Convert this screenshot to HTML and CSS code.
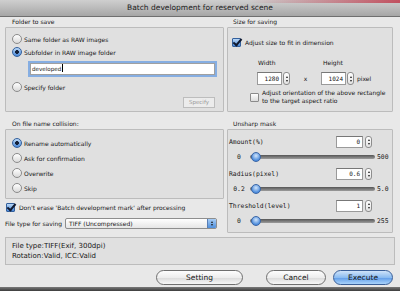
FILE: index.html
```html
<!DOCTYPE html>
<html lang="en">
<head>
  <meta charset="UTF-8">
  <title>Batch development for reserved scene</title>
  <link rel="stylesheet" href="styles.css">
</head>
<body>
  <div class="window">
    <div class="titlebar">Batch development for reserved scene</div>

    <div class="content">
      <div class="grid">
        <!-- Folder to save -->
        <section class="group">
          <div class="group-label">Folder to save</div>
          <div class="group-box folder-box">
            <div class="radio-row"><span class="radio"></span>Same folder as RAW images</div>
            <div class="radio-row row-tight"><span class="radio on"></span>Subfolder in RAW image folder</div>
            <div class="text-input">developed<span class="caret"></span></div>
            <div class="radio-row row-specify"><span class="radio"></span>Specify folder</div>
            <div class="small-btn">Specify</div>
          </div>
        </section>

        <!-- Size for saving -->
        <section class="group">
          <div class="group-label">Size for saving</div>
          <div class="group-box size-box">
            <div class="check-row"><span class="checkbox on"></span>Adjust size to fit in dimension</div>
            <div class="dim-grid">
              <span class="dim-label">Width</span>
              <span></span>
              <span class="dim-label dim-label-h">Height</span>
              <span></span>
              <div class="num-field"><span class="num-input">1280</span><span class="stepper"><i class="up"></i><i class="down"></i></span></div>
              <span class="times">x</span>
              <div class="num-field"><span class="num-input">1024</span><span class="stepper"><i class="up"></i><i class="down"></i></span></div>
              <span class="unit">pixel</span>
            </div>
            <div class="check-row orient-row">
              <span class="checkbox"></span>
              <span class="two-lines">Adjust orientation of the above rectangle<br>to the target aspect ratio</span>
            </div>
          </div>
        </section>

        <!-- Left column: collision + options -->
        <div class="left-col">
          <section class="group">
            <div class="group-label">On file name collision:</div>
            <div class="group-box collision-box">
              <div class="radio-row"><span class="radio on"></span>Rename automatically</div>
              <div class="radio-row"><span class="radio"></span>Ask for confirmation</div>
              <div class="radio-row"><span class="radio"></span>Overwrite</div>
              <div class="radio-row"><span class="radio"></span>Skip</div>
            </div>
          </section>
          <div class="check-row erase-row"><span class="checkbox on"></span>Don't erase 'Batch development mark' after processing</div>
          <div class="filetype-row">
            <span>File type for saving</span>
            <div class="select">
              <span class="select-text">TIFF (Uncompressed)</span>
              <span class="select-arrow"><i class="up"></i><i class="down"></i></span>
            </div>
          </div>
        </div>

        <!-- Unsharp mask -->
        <section class="group">
          <div class="group-label">Unsharp mask</div>
          <div class="group-box unsharp-box">
            <div class="param">
              <div class="param-row">
                <span class="param-name">Amount(%)</span>
                <div class="num-field"><span class="num-input">0</span><span class="stepper"><i class="up"></i><i class="down"></i></span></div>
              </div>
              <div class="slider-row">
                <span class="slider-min">0</span>
                <span class="track"><span class="thumb"></span></span>
                <span class="slider-max">500</span>
              </div>
            </div>
            <div class="param">
              <div class="param-row">
                <span class="param-name">Radius(pixel)</span>
                <div class="num-field"><span class="num-input">0.6</span><span class="stepper"><i class="up"></i><i class="down"></i></span></div>
              </div>
              <div class="slider-row">
                <span class="slider-min">0.2</span>
                <span class="track"><span class="thumb"></span></span>
                <span class="slider-max">5.0</span>
              </div>
            </div>
            <div class="param">
              <div class="param-row">
                <span class="param-name">Threshold(level)</span>
                <div class="num-field"><span class="num-input">1</span><span class="stepper"><i class="up"></i><i class="down"></i></span></div>
              </div>
              <div class="slider-row">
                <span class="slider-min">0</span>
                <span class="track"><span class="thumb"></span></span>
                <span class="slider-max">255</span>
              </div>
            </div>
          </div>
        </section>
      </div>

      <div class="info">
        <div>File type:TIFF(Exif, 300dpi)</div>
        <div>Rotation:Valid, ICC:Valid</div>
      </div>

      <div class="buttons">
        <div class="btn btn-setting">Setting</div>
        <div class="btn btn-cancel">Cancel</div>
        <div class="btn btn-execute">Execute</div>
      </div>
    </div>

    <div class="bottom-edge"></div>
  </div>
</body>
</html>
```

FILE: styles.css
```css
* {
  margin: 0;
  padding: 0;
  box-sizing: border-box;
}

body {
  width: 400px;
  height: 291px;
  overflow: hidden;
  background-color: #e8e8e8;
  font-family: 'DejaVu Sans', sans-serif;
  font-size: 6px;
  color: #161616;
}

.window {
  height: 291px;
  display: flex;
  flex-direction: column;
}

.titlebar {
  height: 17px;
  line-height: 16px;
  text-align: center;
  font-size: 7.5px;
  color: #1c1c1c;
  background:
    linear-gradient(to right, rgba(190, 40, 60, 0) 62%, rgba(190, 40, 60, 0.75)) top / 100% 3px no-repeat,
    linear-gradient(#cfcfcf, #a6a6a6);
  border-bottom: 1px solid #6f6f6f;
}

.content {
  flex: 1;
  padding: 0 5px;
}

.grid {
  display: grid;
  grid-template-columns: 219px 166px;
  column-gap: 3px;
}

.group-label {
  height: 10px;
  line-height: 10px;
  padding-left: 7px;
}

.grid > :nth-child(3),
.grid > :nth-child(4) {
  margin-top: 7px;
}

.grid > :nth-child(2) .group-label,
.grid > :nth-child(4) .group-label {
  padding-left: 6px;
}

.group-box {
  border: 1px solid #bcbcbc;
  background-color: #e0e0e0;
  border-radius: 1px;
}

/* radios and checkboxes */
.radio-row,
.check-row {
  display: flex;
  align-items: center;
  gap: 2px;
  height: 12px;
}

.radio {
  width: 10px;
  height: 10px;
  border-radius: 50%;
  border: 1px solid #8b8b8b;
  background: linear-gradient(#ffffff, #d9d9d9);
  flex-shrink: 0;
}

.radio.on {
  border-color: #34609c;
  background:
    radial-gradient(circle, #13203a 0 1.6px, transparent 2.2px),
    linear-gradient(#b9d8f8, #4a88d8);
}

.checkbox {
  width: 9px;
  height: 9px;
  border: 1px solid #8b8b8b;
  border-radius: 1px;
  background: linear-gradient(#ffffff, #dcdcdc);
  flex-shrink: 0;
  position: relative;
}

.checkbox.on {
  border-color: #34609c;
  background: linear-gradient(#b9d8f8, #4a88d8);
}

.checkbox.on::after {
  content: '';
  position: absolute;
  left: 2px;
  top: -2px;
  width: 3px;
  height: 7px;
  border-right: 2px solid #101a30;
  border-bottom: 2px solid #101a30;
  transform: rotate(40deg);
}

/* folder to save */
.folder-box {
  height: 85px;
  padding: 5px 6px 0 6px;
  display: flex;
  flex-direction: column;
}

.row-tight {
  margin-top: 1px;
}

.text-input {
  margin: 3px 0 0 16px;
  width: 189px;
  height: 16px;
  line-height: 12px;
  padding-left: 2px;
  font-size: 5.6px;
  background-color: #ffffff;
  border: 2px solid #86aee2;
  box-shadow: inset 0 0 0 1px #a0a0a0;
}

.caret {
  display: inline-block;
  width: 1px;
  height: 8px;
  margin-left: 1px;
  vertical-align: -1px;
  background-color: #000;
}

.row-specify {
  margin-top: 4px;
}

.small-btn {
  align-self: flex-end;
  margin: 4px 2px 0 0;
  width: 32px;
  height: 11px;
  line-height: 9px;
  text-align: center;
  font-size: 5.5px;
  color: #9a9a9a;
  background-color: #ececec;
  border: 1px solid #bdbdbd;
}

/* size for saving */
.size-box {
  height: 85px;
  padding: 8px 4px 0 4px;
}

.check-row {
  gap: 4px;
}

.dim-grid {
  display: grid;
  grid-template-columns: 33px 31px 34px auto;
  grid-template-rows: 10px 13px;
  row-gap: 4px;
  margin: 10px 0 0 25px;
}

.dim-label {
  line-height: 10px;
  padding-left: 1px;
}

.dim-label-h {
  padding-left: 2px;
}

.num-field {
  display: flex;
  align-items: stretch;
  gap: 1px;
  height: 13px;
}

.num-input {
  width: 25px;
  padding: 0 2px;
  text-align: right;
  line-height: 11px;
  font-family: 'DejaVu Sans Mono', monospace;
  font-size: 6px;
  background-color: #ffffff;
  border: 1px solid #9a9a9a;
  border-top-color: #777;
}

.stepper {
  width: 7px;
  border: 1px solid #8d8d8d;
  border-radius: 3px;
  background: linear-gradient(#ffffff, #e2e2e2);
  display: flex;
  flex-direction: column;
  align-items: center;
  justify-content: center;
  gap: 2px;
}

.up,
.down {
  display: block;
  width: 0;
  height: 0;
  border-left: 1.5px solid transparent;
  border-right: 1.5px solid transparent;
}

.up {
  border-bottom: 2px solid #1e1e1e;
}

.down {
  border-top: 2px solid #1e1e1e;
}

.times {
  text-align: center;
  line-height: 13px;
}

.unit {
  line-height: 13px;
  padding-left: 2px;
}

.orient-row {
  margin: 4px 0 0 18px;
  height: 16px;
  gap: 3px;
}

.two-lines {
  line-height: 8px;
}

/* collision */
.collision-box {
  height: 70px;
  padding: 7px 6px 0 6px;
  display: flex;
  flex-direction: column;
  gap: 3px;
}

.erase-row {
  margin: 2px 0 0 1px;
}

.filetype-row {
  display: flex;
  align-items: center;
  gap: 3px;
  margin-top: 5px;
  height: 11px;
}

.select {
  width: 152px;
  height: 11px;
  display: flex;
  border: 1px solid #8e8e8e;
  border-radius: 2px;
  background: linear-gradient(#ffffff, #e6e6e6);
  overflow: hidden;
}

.select-text {
  flex: 1;
  line-height: 9px;
  padding-left: 3px;
}

.select-arrow {
  width: 9px;
  display: flex;
  flex-direction: column;
  align-items: center;
  justify-content: center;
  gap: 1px;
  background: linear-gradient(#a7cdf6, #4f8fdc);
  border-left: 1px solid #5a7fb5;
}

/* unsharp mask */
.unsharp-box {
  height: 104px;
  padding: 6px 0 0 1px;
  display: flex;
  flex-direction: column;
  gap: 5px;
  font-family: 'DejaVu Sans Mono', monospace;
  font-size: 6.4px;
}

.param-row {
  display: flex;
  align-items: center;
  height: 12px;
  padding-right: 20px;
}

.param-name {
  flex: 1;
}

.param-row .num-field {
  height: 12px;
  gap: 2px;
}

.param-row .num-input {
  width: 27px;
  line-height: 10px;
}

.slider-row {
  display: flex;
  align-items: center;
  height: 12px;
  margin-top: 3px;
  padding-left: 1px;
}

.slider-min {
  width: 18px;
  text-align: center;
}

.track {
  position: relative;
  width: 125px;
  height: 4px;
  margin: 0 2px;
  border-radius: 2px;
  background: linear-gradient(#555555, #9c9c9c);
}

.thumb {
  position: absolute;
  left: 1px;
  top: -3px;
  width: 10px;
  height: 10px;
  border-radius: 50%;
  border: 1px solid #3a66a6;
  background: radial-gradient(circle at 50% 35%, #d2e6fb, #4d8cdc 70%);
}

/* info + buttons */
.info {
  margin-top: 4px;
  width: 390px;
  height: 28px;
  padding: 3px 0 0 6px;
  font-size: 7px;
  line-height: 10px;
  background-color: #e0e0e0;
  border: 1px solid #bcbcbc;
}

.buttons {
  display: flex;
  justify-content: flex-end;
  margin-top: 5px;
  padding-right: 2px;
}

.btn {
  height: 15px;
  line-height: 13px;
  text-align: center;
  font-size: 7.5px;
  border-radius: 8px;
  border: 1px solid #6f6f6f;
  background: linear-gradient(#fdfdfd, #ededed 50%, #dadada 51%, #f6f6f6);
}

.btn-setting {
  width: 87px;
}

.btn-cancel {
  width: 60px;
  margin-left: 23px;
}

.btn-execute {
  width: 60px;
  margin-left: 7px;
  border-color: #3a5f98;
  background: linear-gradient(#cfe3f9, #8bbcf1 50%, #5e9be8 51%, #a9d3fb);
}

.bottom-edge {
  height: 4px;
  background: linear-gradient(#7a7a7a, #3c3c3c);
}
```
